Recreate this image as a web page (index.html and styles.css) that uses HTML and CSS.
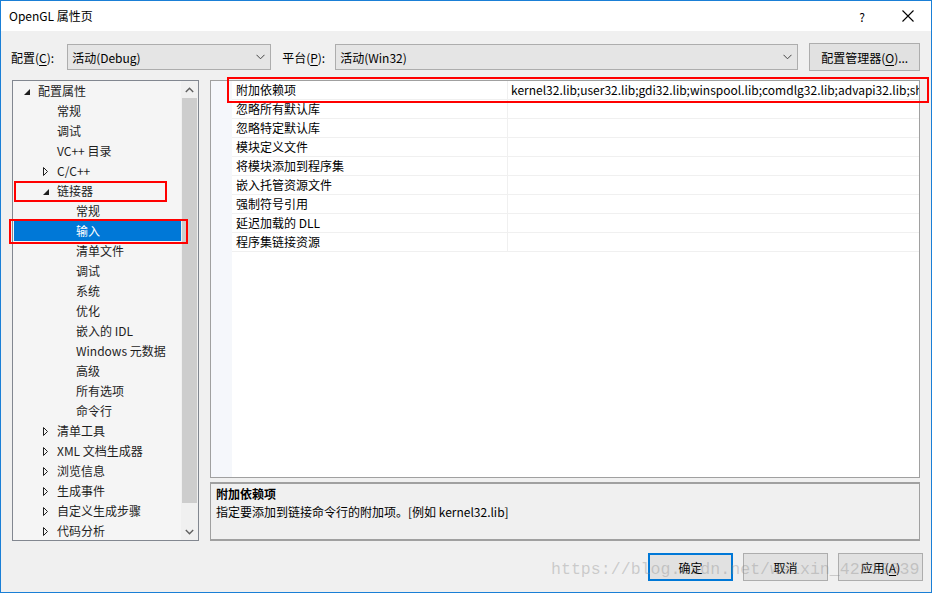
FILE: index.html
```html
<!DOCTYPE html>
<html lang="zh-CN">
<head>
<meta charset="utf-8">
<title>OpenGL 属性页</title>
<link rel="stylesheet" href="styles.css">
</head>
<body>
<div class="window">
  <div class="titlebar">
    <span class="title">OpenGL 属性页</span>
    <div class="caption-btns">
      <span class="help">?</span>
      <span class="close"><svg width="12" height="12" viewBox="0 0 12 12"><path d="M0.5 0.5 L11.5 11.5 M11.5 0.5 L0.5 11.5" stroke="#000" stroke-width="1.1" fill="none"/></svg></span>
    </div>
  </div>
  <div class="content">
    <div class="config-row">
      <span class="label">配置(<u>C</u>):</span>
      <div class="combo combo-config"><span>活动(Debug)</span><svg class="chev" width="9" height="6" viewBox="0 0 9 6"><path d="M0.5 0.8 L4.5 4.8 L8.5 0.8" stroke="#444" stroke-width="1" fill="none"/></svg></div>
      <span class="label label-platform">平台(<u>P</u>):</span>
      <div class="combo combo-platform"><span>活动(Win32)</span><svg class="chev" width="9" height="6" viewBox="0 0 9 6"><path d="M0.5 0.8 L4.5 4.8 L8.5 0.8" stroke="#444" stroke-width="1" fill="none"/></svg></div>
      <button class="btn btn-manager">配置管理器(<u>O</u>)...</button>
    </div>
    <div class="main">
      <div class="tree">
        <ul class="tree-list">
          <li class="l0"><span class="tw"><svg width="6" height="6" viewBox="0 0 6 6"><path d="M6 0 L6 6 L0 6 Z" fill="#1e1e1e"/></svg></span>配置属性</li>
          <li class="l1"><span class="tw"></span>常规</li>
          <li class="l1"><span class="tw"></span>调试</li>
          <li class="l1"><span class="tw"></span>VC++ 目录</li>
          <li class="l1"><span class="tw"><svg class="col" width="5" height="9" viewBox="0 0 5 9"><path d="M0.5 0.5 L4.5 4.5 L0.5 8.5 Z" fill="none" stroke="#1e1e1e" stroke-width="1"/></svg></span>C/C++</li>
          <li class="l1"><span class="tw"><svg width="6" height="6" viewBox="0 0 6 6"><path d="M6 0 L6 6 L0 6 Z" fill="#1e1e1e"/></svg></span>链接器</li>
          <li class="l2"><span class="tw"></span>常规</li>
          <li class="l2 selected"><span class="tw"></span>输入</li>
          <li class="l2"><span class="tw"></span>清单文件</li>
          <li class="l2"><span class="tw"></span>调试</li>
          <li class="l2"><span class="tw"></span>系统</li>
          <li class="l2"><span class="tw"></span>优化</li>
          <li class="l2"><span class="tw"></span>嵌入的 IDL</li>
          <li class="l2"><span class="tw"></span>Windows 元数据</li>
          <li class="l2"><span class="tw"></span>高级</li>
          <li class="l2"><span class="tw"></span>所有选项</li>
          <li class="l2"><span class="tw"></span>命令行</li>
          <li class="l1"><span class="tw"><svg class="col" width="5" height="9" viewBox="0 0 5 9"><path d="M0.5 0.5 L4.5 4.5 L0.5 8.5 Z" fill="none" stroke="#1e1e1e" stroke-width="1"/></svg></span>清单工具</li>
          <li class="l1"><span class="tw"><svg class="col" width="5" height="9" viewBox="0 0 5 9"><path d="M0.5 0.5 L4.5 4.5 L0.5 8.5 Z" fill="none" stroke="#1e1e1e" stroke-width="1"/></svg></span>XML 文档生成器</li>
          <li class="l1"><span class="tw"><svg class="col" width="5" height="9" viewBox="0 0 5 9"><path d="M0.5 0.5 L4.5 4.5 L0.5 8.5 Z" fill="none" stroke="#1e1e1e" stroke-width="1"/></svg></span>浏览信息</li>
          <li class="l1"><span class="tw"><svg class="col" width="5" height="9" viewBox="0 0 5 9"><path d="M0.5 0.5 L4.5 4.5 L0.5 8.5 Z" fill="none" stroke="#1e1e1e" stroke-width="1"/></svg></span>生成事件</li>
          <li class="l1"><span class="tw"><svg class="col" width="5" height="9" viewBox="0 0 5 9"><path d="M0.5 0.5 L4.5 4.5 L0.5 8.5 Z" fill="none" stroke="#1e1e1e" stroke-width="1"/></svg></span>自定义生成步骤</li>
          <li class="l1"><span class="tw"><svg class="col" width="5" height="9" viewBox="0 0 5 9"><path d="M0.5 0.5 L4.5 4.5 L0.5 8.5 Z" fill="none" stroke="#1e1e1e" stroke-width="1"/></svg></span>代码分析</li>
        </ul>
        <div class="vscroll">
          <div class="sb-arrow"><svg width="9" height="6" viewBox="0 0 9 6"><path d="M0.8 5 L4.5 1.3 L8.2 5" stroke="#606060" stroke-width="1.4" fill="none"/></svg></div>
          <div class="sb-track"><div class="sb-thumb"></div></div>
          <div class="sb-arrow"><svg width="9" height="6" viewBox="0 0 9 6"><path d="M0.8 1 L4.5 4.7 L8.2 1" stroke="#606060" stroke-width="1.4" fill="none"/></svg></div>
        </div>
      </div>
      <div class="right">
        <div class="grid">
          <div class="grid-row"><span class="name">附加依赖项</span><span class="value">kernel32.lib;user32.lib;gdi32.lib;winspool.lib;comdlg32.lib;advapi32.lib;shell32.lib;ole32.lib;oleaut32.lib;uuid.lib;odbc32.lib;odbccp32.lib;%(AdditionalDependencies)</span></div>
          <div class="grid-row"><span class="name">忽略所有默认库</span><span class="value"></span></div>
          <div class="grid-row"><span class="name">忽略特定默认库</span><span class="value"></span></div>
          <div class="grid-row"><span class="name">模块定义文件</span><span class="value"></span></div>
          <div class="grid-row"><span class="name">将模块添加到程序集</span><span class="value"></span></div>
          <div class="grid-row"><span class="name">嵌入托管资源文件</span><span class="value"></span></div>
          <div class="grid-row"><span class="name">强制符号引用</span><span class="value"></span></div>
          <div class="grid-row"><span class="name">延迟加载的 DLL</span><span class="value"></span></div>
          <div class="grid-row"><span class="name">程序集链接资源</span><span class="value"></span></div>
        </div>
        <div class="desc">
          <div class="desc-title">附加依赖项</div>
          <div class="desc-text">指定要添加到链接命令行的附加项。[例如 kernel32.lib]</div>
        </div>
      </div>
    </div>
    <div class="footer">
      <button class="btn btn-dlg btn-default">确定</button>
      <button class="btn btn-dlg">取消</button>
      <button class="btn btn-dlg">应用(<u>A</u>)</button>
    </div>
  </div>
  <div class="mark mark-row"></div>
  <div class="mark mark-linker"></div>
  <div class="mark mark-input"></div>
  <div class="watermark">https://blog.csdn.net/weixin_42813839</div>
</div>
</body>
</html>
```

FILE: styles.css
```css
* { box-sizing: border-box; }
html, body { margin: 0; padding: 0; }
body {
  width: 932px;
  height: 593px;
  overflow: hidden;
  font-family: "Segoe UI", "Noto Sans CJK SC", "Noto Sans", sans-serif;
  font-size: 12px;
  color: #000;
}
.window {
  position: relative;
  width: 932px;
  height: 593px;
  border: 1px solid #1a7fd6;
  background: #f0f0f0;
  display: flex;
  flex-direction: column;
}
.titlebar {
  height: 30px;
  background: #fff;
  display: flex;
  align-items: center;
  justify-content: space-between;
  padding-left: 8px;
  flex: none;
}
.title { font-size: 12px; line-height: 16px; margin-top: -1px; }
.caption-btns { display: flex; align-items: center; height: 100%; }
.help { width: 46px; text-align: center; font-size: 12px; }
.close { width: 46px; display: flex; justify-content: center; align-items: center; }

.content {
  flex: 1;
  display: flex;
  flex-direction: column;
  padding: 0 8px 0 11px;
}
.config-row {
  display: flex;
  align-items: center;
  height: 28px;
  margin-top: 12px;
}
.label { white-space: nowrap; margin-left: -1px; }
.label u, .btn u { text-decoration: underline; text-underline-offset: 2px; }
.combo {
  height: 26px;
  background: #e5e5e5;
  border: 1px solid #adadad;
  display: flex;
  align-items: center;
  justify-content: space-between;
  padding: 0 5px 0 4px;
}
.combo-config { width: 204px; margin-left: 13px; }
.combo-platform { width: 463px; margin-left: 10px; }
.label-platform { margin-left: 11px; }
.chev { flex: none; }
.btn {
  font-family: inherit;
  font-size: 12px;
  color: #000;
  background: #e1e1e1;
  border: 1px solid #adadad;
  padding: 0;
  margin: 0;
}
.btn-manager { width: 111px; height: 28px; margin-left: 11px; }

.main {
  display: flex;
  height: 461px;
  margin-top: 9px;
  flex: none;
}
.tree {
  width: 187px;
  height: 461px;
  border: 1px solid #828790;
  background: #f5f5f5;
  display: flex;
  overflow: hidden;
}
.tree-list {
  list-style: none;
  margin: 0;
  padding: 0;
  flex: 1;
  color: #1e1e1e;
}
.tree-list li {
  height: 20px;
  line-height: 20px;
  display: flex;
  align-items: center;
  white-space: nowrap;
}
.tree-list .tw {
  width: 19px;
  height: 20px;
  display: flex;
  align-items: center;
  flex: none;
}
.tree-list .l0 { padding-left: 6px; }
.tree-list .l1 { padding-left: 25px; }
.tree-list .l2 { padding-left: 44px; }
.tree-list .l0 .tw svg { margin-left: 5px; margin-top: 1px; }
.tree-list .l1 .tw svg { margin-left: 5px; margin-top: 1px; }
.tree-list li.selected {
  background: #0078d7;
  color: #fff;
  margin-left: 1px;
  padding-left: 43px;
}
.vscroll {
  width: 17px;
  flex: none;
  background: #f0f0f0;
  display: flex;
  flex-direction: column;
}
.sb-arrow {
  height: 17px;
  display: flex;
  align-items: center;
  justify-content: center;
  flex: none;
}
.sb-track { flex: 1; padding: 0 1px; }
.sb-thumb {
  height: 405px;
  background: #cdcdcd;
}

.right {
  margin-left: 11px;
  width: 710px;
  display: flex;
  flex-direction: column;
}
.grid {
  height: 398px;
  border: 1px solid #a0a0a0;
  background: #fff;
  padding-left: 21px;
  background-image: linear-gradient(#f5f7fb, #f5f7fb);
  background-size: 21px 100%;
  background-repeat: no-repeat;
  overflow: hidden;
}
.grid-row {
  display: flex;
  height: 19px;
  line-height: 18px;
  border-bottom: 1px solid #f0f0f0;
  background: #fff;
}
.grid-row .name {
  width: 276px;
  padding-left: 4px;
  border-right: 1px solid #f0f0f0;
  flex: none;
  white-space: nowrap;
}
.grid-row .value {
  flex: 1;
  padding-left: 3px;
  white-space: nowrap;
  overflow: hidden;
}
.desc {
  margin-top: 4px;
  height: 59px;
  border: 1px solid #a0a0a0;
  border-top: 2px solid #a0a0a0;
  border-bottom: 2px solid #a0a0a0;
  background: #f0f0f0;
  padding: 1px 5px;
  line-height: 18px;
}
.desc-title { font-weight: bold; }

.footer {
  display: flex;
  justify-content: flex-end;
  gap: 10px;
  margin-top: 12px;
}
.btn-dlg { width: 85px; height: 28px; }
.btn-default { border: 2px solid #0078d7; }

.mark {
  position: absolute;
  border: 2px solid #ff0000;
  pointer-events: none;
}
.mark-row { left: 226px; top: 76px; width: 702px; height: 26px; }
.mark-linker { left: 13px; top: 180px; width: 153px; height: 21px; }
.mark-input { left: 8px; top: 218px; width: 179px; height: 25px; }
.watermark {
  position: absolute;
  left: 550px;
  top: 559px;
  font-family: "Liberation Mono", monospace;
  font-size: 16.6px;
  color: rgba(140, 140, 140, 0.38);
  white-space: nowrap;
  pointer-events: none;
}
```
